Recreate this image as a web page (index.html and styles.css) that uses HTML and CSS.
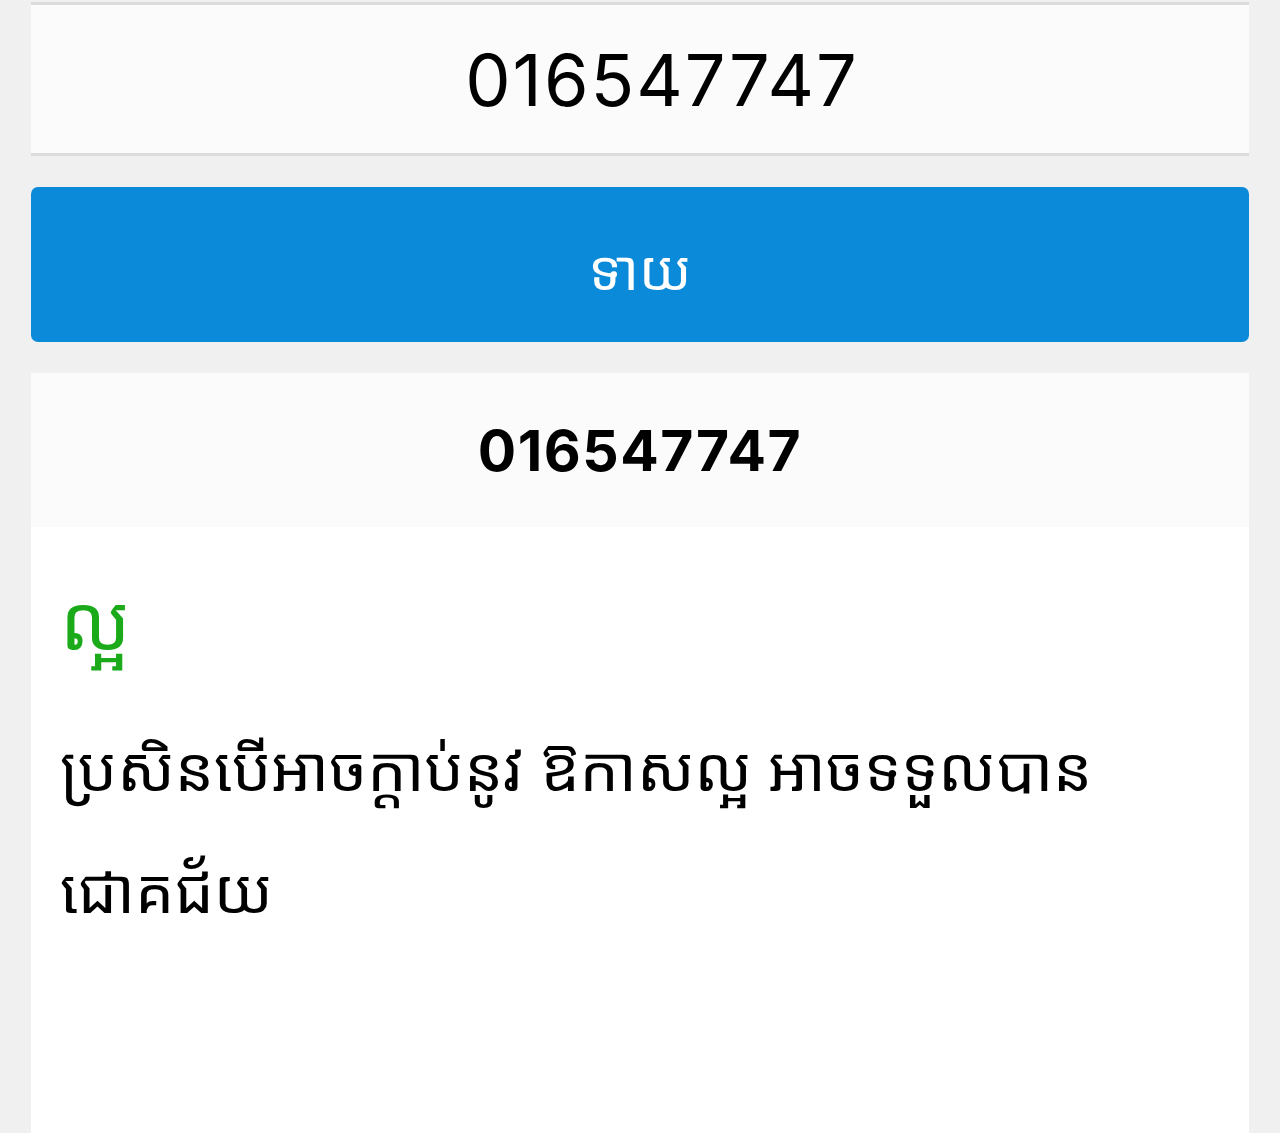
FILE: index.html
```html
<!DOCTYPE html>
<html>

<head>
    <meta charset="utf-8" />
    <meta name="viewport" content="width=device-width, initial-scale=1" />
    <title>ទាយលេខទូរស័ព្ទ</title>
    <link rel="stylesheet" href="styles.css">
</head>

<body>
    <div class="wrapper">
        <div class="phone-box">
            <input id="phone" class="phone-input" type="text" value="016547747" />
        </div>

        <button class="guess-btn" onclick="guess()">ទាយ</button>

        <div class="result">
            <div class="result-number" id="result-number">016547747</div>
            <div class="result-body">
                <div class="verdict" id="verdict">ល្អ</div>
                <div class="meaning" id="meaning">ប្រសិនបើអាចក្ដាប់នូវ ឱកាសល្អ អាចទទួលបាន ជោគជ័យ</div>
            </div>
        </div>
    </div>

    <script>
        function guess() {
            var num = document.getElementById("phone").value;
            document.getElementById("result-number").innerText = num;
        }
    </script>
</body>

</html>
```

FILE: styles.css
```css
body {
    margin: 0;
    background: #f0f0f0;
    font-family: Inter, "Noto Sans", "Noto Sans Khmer", "Khmer OS", sans-serif;
    overflow: hidden;
}

.wrapper {
    padding: 2px 31px 0 31px;
    display: flex;
    flex-direction: column;
}

.phone-box {
    background: #fbfbfb;
    border-top: 3px solid #dcdcdc;
    border-bottom: 3px solid #dcdcdc;
    height: 148px;
    display: flex;
    align-items: center;
}

.phone-input {
    width: 100%;
    border: none;
    background: transparent;
    text-align: center;
    font-family: Inter, sans-serif;
    font-size: 72px;
    letter-spacing: 2px;
    color: #000;
    outline: none;
    padding: 0 0 0 44px;
}

.guess-btn {
    margin-top: 31px;
    height: 155px;
    border: none;
    border-radius: 7px;
    background: #0a8ad8;
    color: #fff;
    font-family: "Noto Sans Khmer", "Khmer OS", sans-serif;
    font-size: 55px;
    padding: 8px 0 0 0;
}

.result {
    margin-top: 31px;
    background: #fff;
    min-height: 800px;
}

.result-number {
    background: #fbfbfb;
    height: 154px;
    display: flex;
    align-items: center;
    justify-content: center;
    font-family: Inter, sans-serif;
    font-weight: 700;
    font-size: 57px;
    letter-spacing: 1.5px;
}

.result-body {
    padding: 34px 29px;
}

.verdict {
    color: #1aaa1a;
    font-family: "Noto Sans Khmer", "Khmer OS", sans-serif;
    font-size: 76px;
    line-height: 120px;
}

.meaning {
    margin-top: 25px;
    color: #000;
    font-size: 62px;
    line-height: 122px;
    font-family: "Noto Sans Khmer", "Khmer OS", sans-serif;
}
```
